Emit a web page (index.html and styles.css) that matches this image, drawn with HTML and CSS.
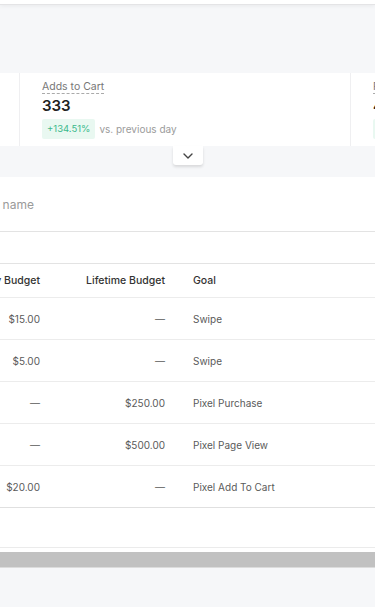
FILE: index.html
```html
<!DOCTYPE html>
<html lang="en">

<head>
    <meta charset="UTF-8">
    <meta name="viewport" content="width=device-width, initial-scale=1.0">
    <title>Campaigns</title>
    <link rel="stylesheet" href="styles.css">
</head>

<body>
    <header class="topbar"></header>

    <section class="stats">
        <div class="stats-track">
            <div class="stat">
                <span class="stat-label">Link Clicks</span>
                <div class="stat-value">1,208</div>
                <div class="stat-change"><span class="badge">+18.20%</span><span class="vs">vs. previous day</span></div>
            </div>
            <div class="stat">
                <span class="stat-label">Adds to Cart</span>
                <div class="stat-value">333</div>
                <div class="stat-change"><span class="badge">+134.51%</span><span class="vs">vs. previous day</span></div>
            </div>
            <div class="stat">
                <span class="stat-label">Purchases</span>
                <div class="stat-value">41</div>
                <div class="stat-change"><span class="badge">+20.59%</span><span class="vs">vs. previous day</span></div>
            </div>
        </div>
    </section>

    <button class="toggle" aria-label="Expand">
        <svg width="10" height="6" viewBox="0 0 10 6"><polyline points="1,1 5,5 9,1" fill="none" stroke="#444" stroke-width="1.4" stroke-linecap="round" stroke-linejoin="round"/></svg>
    </button>

    <section class="panel">
        <div class="search"><span class="search-text">Search by campaign name</span></div>
        <div class="toolbar"></div>

        <div class="table-wrap">
            <table>
                <colgroup>
                    <col class="c-check">
                    <col class="c-name">
                    <col class="c-status">
                    <col class="c-daily">
                    <col class="c-life">
                    <col class="c-goal">
                    <col class="c-date">
                </colgroup>
                <thead>
                    <tr>
                        <th></th>
                        <th>Campaign Name</th>
                        <th>Status</th>
                        <th class="num">Daily Budget</th>
                        <th class="num">Lifetime Budget</th>
                        <th>Goal</th>
                        <th>Start Date</th>
                    </tr>
                </thead>
                <tbody>
                    <tr><td></td><td>Spring Swipe Up</td><td>Active</td><td class="num">$15.00</td><td class="num">—</td><td>Swipe</td><td>Mar 02, 2020</td></tr>
                    <tr><td></td><td>Story Teaser</td><td>Active</td><td class="num">$5.00</td><td class="num">—</td><td>Swipe</td><td>Mar 04, 2020</td></tr>
                    <tr><td></td><td>Checkout Push</td><td>Paused</td><td class="num">—</td><td class="num">$250.00</td><td>Pixel Purchase</td><td>Mar 06, 2020</td></tr>
                    <tr><td></td><td>Landing Visits</td><td>Active</td><td class="num">—</td><td class="num">$500.00</td><td>Pixel Page View</td><td>Mar 09, 2020</td></tr>
                    <tr><td></td><td>Cart Builder</td><td>Active</td><td class="num">$20.00</td><td class="num">—</td><td>Pixel Add To Cart</td><td>Mar 11, 2020</td></tr>
                </tbody>
            </table>
        </div>

        <div class="hscroll"><div class="thumb"></div></div>
    </section>
</body>

</html>
```

FILE: styles.css
```css
body {
    margin: 0;
    background-color: #f6f7f9;
    font-family: Inter, 'Liberation Sans', sans-serif;
    color: #333;
    overflow: hidden;
}

.topbar {
    height: 4px;
    background-color: #fff;
    border-bottom: 1px solid #e4e4e6;
    box-shadow: 0 1px 4px rgba(0, 0, 0, 0.06);
}

/* stat cards, scrolled sideways */
.stats {
    margin-top: 68px;
    height: 73px;
    background-color: #fff;
    overflow: hidden;
}

.stats-track {
    display: flex;
    margin-left: -311px;
}

.stat {
    display: flex;
    flex-direction: column;
    align-items: flex-start;
    flex: 0 0 331px;
    box-sizing: border-box;
    height: 73px;
    padding: 7px 0 0 22px;
    border-right: 1px solid #efeff1;
}

.stat-label {
    font-size: 10.5px;
    line-height: 13px;
    color: #777;
    border-bottom: 1px dashed #aaa;
}

.stat-value {
    margin-top: 3px;
    font-size: 15px;
    line-height: 18px;
    font-weight: 600;
    color: #222;
}

.stat-change {
    display: flex;
    align-items: center;
    gap: 4px;
    margin-top: 4px;
}

.badge {
    height: 20px;
    line-height: 20px;
    padding: 0 5px;
    border-radius: 2px;
    background-color: #e9f8f1;
    color: #3bb98b;
    font-size: 9.5px;
}

.vs {
    font-size: 10px;
    color: #9b9b9b;
}

.toggle {
    display: flex;
    align-items: center;
    justify-content: center;
    width: 30px;
    height: 19px;
    margin: 0 auto 12px auto;
    padding: 0;
    border: none;
    border-radius: 0 0 3px 3px;
    background-color: #fff;
    box-shadow: 0 2px 3px rgba(0, 0, 0, 0.12);
}

.panel {
    background-color: #fff;
}

.search {
    display: flex;
    align-items: center;
    height: 54px;
    border-bottom: 1px solid #e3e3e3;
    overflow: hidden;
    white-space: nowrap;
}

.search-text {
    margin-left: -117px;
    font-size: 12px;
    color: #9a9a9a;
}

.toolbar {
    height: 31px;
    border-bottom: 1px solid #e3e3e3;
}

.table-wrap {
    height: 283px;
    overflow: hidden;
}

table {
    width: 1000px;
    margin-left: -406px;
    border-collapse: collapse;
    table-layout: fixed;
    white-space: nowrap;
}

.c-check { width: 40px; }
.c-name { width: 230px; }
.c-status { width: 90px; }
.c-daily { width: 100px; }
.c-life { width: 125px; }
.c-goal { width: 240px; }

th {
    height: 33px;
    padding: 0 14px;
    text-align: left;
    font-size: 10.5px;
    font-weight: 500;
    color: #333;
    border-bottom: 1px solid #ececec;
}

td {
    height: 41px;
    padding: 0 14px;
    font-size: 10px;
    color: #5a5a5a;
    border-bottom: 1px solid #ececec;
}

tbody tr:last-child td {
    border-bottom-color: #e0e0e0;
}

.num {
    text-align: right;
}

.hscroll {
    padding-top: 4px;
    border-top: 1px solid #ebebeb;
    border-bottom: 1px solid #dcdcdc;
}

.thumb {
    height: 15px;
    background-color: #c1c1c1;
}
```
